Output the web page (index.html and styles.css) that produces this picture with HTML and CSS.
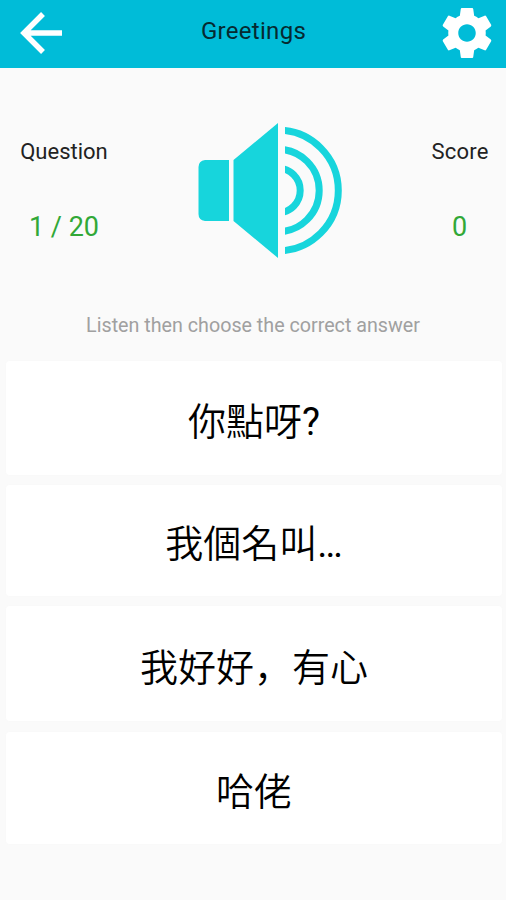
FILE: index.html
```html
<!DOCTYPE html>
<html lang="en">
<head>
<meta charset="utf-8">
<title>Greetings</title>
<link rel="stylesheet" href="styles.css">
</head>
<body>
<header class="bar">
  <svg class="back" viewBox="0 0 44 42"><path d="M43 21H6M24 2 5 21l19 19" fill="none" stroke="#fff" stroke-width="5.500"/></svg>
  <h1 class="title">Greetings</h1>
  <svg class="gear" viewBox="2 2 20 20"><path fill="#fff" d="M19.43 12.98c.04-.32.07-.64.07-.98s-.03-.66-.07-.98l2.11-1.65c.19-.15.24-.42.12-.64l-2-3.46c-.12-.22-.39-.3-.61-.22l-2.49 1c-.52-.4-1.08-.73-1.69-.98l-.38-2.65C14.46 2.18 14.25 2 14 2h-4c-.25 0-.46.18-.49.42l-.38 2.65c-.61.25-1.17.59-1.69.98l-2.49-1c-.23-.09-.49 0-.61.22l-2 3.46c-.13.22-.07.49.12.64l2.11 1.65c-.04.32-.07.65-.07.98s.03.66.07.98l-2.11 1.65c-.19.15-.24.42-.12.64l2 3.46c.12.22.39.3.61.22l2.49-1c.52.4 1.08.73 1.69.98l.38 2.65c.03.24.24.42.49.42h4c.25 0 .46-.18.49-.42l.38-2.65c.61-.25 1.17-.59 1.69-.98l2.49 1c.23.09.49 0 .61-.22l2-3.46c.12-.22.07-.49-.12-.64l-2.11-1.65zM12 15.5c-1.93 0-3.5-1.57-3.5-3.5s1.57-3.5 3.5-3.5 3.5 1.57 3.5 3.5-1.57 3.5-3.5 3.5z"/></svg>
</header>
<main>
  <section class="status">
    <div class="stat question"><span class="label">Question</span><span class="value">1 / 20</span></div>
    <svg class="speaker" viewBox="198 123 144 136">
      <clipPath id="waves"><path d="M285 123h57v136h-57z"/></clipPath>
      <g fill="#17d5dc"><path d="M205 160H229v61h-24q-6.500-1-6.500-7v-47q0-6 6.500-7zM233.500 160 278 123v135l-44.500-37z"/></g>
      <g fill="none" stroke="#17d5dc" stroke-width="7" clip-path="url(#waves)"><circle cx="278" cy="190.500" r="60.300"/><circle cx="278" cy="190.500" r="41.200"/><circle cx="278" cy="190.500" r="22.200"/></g>
    </svg>
    <div class="stat score"><span class="label">Score</span><span class="value">0</span></div>
  </section>
  <p class="hint">Listen then choose the correct answer</p>
  <div class="answers">
    <button class="answer">你點呀<span class="mark">?</span></button>
    <button class="answer">我個名叫<span class="mark">…</span></button>
    <button class="answer">我好好<span class="comma" lang="zh-Hans">，</span>有心</button>
    <button class="answer">哈佬</button>
  </div>
</main>
</body>
</html>
```
FILE: styles.css
```css
* { box-sizing: border-box; }
body { margin: 0; height: 900px; background: #fafafa; color: #222; font-family: Roboto, "Noto Sans CJK TC", sans-serif; overflow: hidden; }
.bar { height: 68px; background: #00bcd8; display: grid; grid-template-columns: 64px 1fr 64px; align-items: start; }
.back { width: 44px; height: 42px; margin: 12px 0 0 19px; }
.title { margin: 17px 0 0 1px; color: #062a30; font-size: 24px; line-height: 28px; font-weight: 400; text-align: center; letter-spacing: .3px; }
.gear { width: 50px; height: 50px; margin: 8px 0 0; }
.status { height: 246px; display: grid; grid-template-columns: 128px 1fr 92px; }
.stat { display: flex; flex-direction: column; align-items: center; padding-top: 70px; }
.label { font-size: 22px; line-height: 28px; }
.score .label { letter-spacing: .2px; }
.score .value { margin-right: 1px; }
.value { margin-top: 45px; font-size: 27px; line-height: 32px; color: #31a837; }
.speaker { width: 144px; height: 136px; margin: 55px 0 0 70px; }
.hint { margin: 0; height: 47px; line-height: 24px; font-size: 19.700px; color: #a0a0a0; text-align: center; }
.answers { display: grid; grid-template-rows: 114px 111px 115px 112px; gap: 10px; padding: 0 4px 0 6px; }
.answer { border: 0; border-radius: 4px; background: #fff; color: #000; font: 350 38px Roboto, "Noto Sans CJK TC", sans-serif; padding: 0; box-shadow: 0 0 2px #f6f6f6; }
.answer:nth-child(3) { padding-top: 2px; }
.answer:last-child { margin-top: 1px; height: 112px; }
.comma { font-family: "Noto Sans CJK SC", sans-serif; }
.mark { font-weight: 400; }
```
